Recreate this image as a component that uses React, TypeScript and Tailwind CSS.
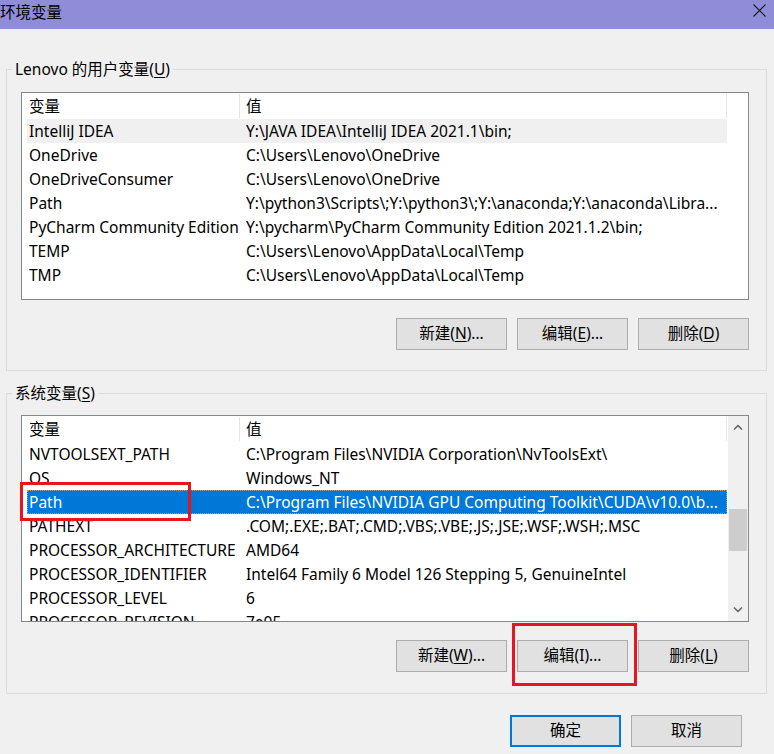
import React from 'react'

type Row = { name: string; value: string }

const userVars: Row[] = [
  { name: 'IntelliJ IDEA', value: 'Y:\\JAVA IDEA\\IntelliJ IDEA 2021.1\\bin;' },
  { name: 'OneDrive', value: 'C:\\Users\\Lenovo\\OneDrive' },
  { name: 'OneDriveConsumer', value: 'C:\\Users\\Lenovo\\OneDrive' },
  { name: 'Path', value: 'Y:\\python3\\Scripts\\;Y:\\python3\\;Y:\\anaconda;Y:\\anaconda\\Libra...' },
  { name: 'PyCharm Community Edition', value: 'Y:\\pycharm\\PyCharm Community Edition 2021.1.2\\bin;' },
  { name: 'TEMP', value: 'C:\\Users\\Lenovo\\AppData\\Local\\Temp' },
  { name: 'TMP', value: 'C:\\Users\\Lenovo\\AppData\\Local\\Temp' },
]

const sysVars: Row[] = [
  { name: 'NVTOOLSEXT_PATH', value: 'C:\\Program Files\\NVIDIA Corporation\\NvToolsExt\\' },
  { name: 'OS', value: 'Windows_NT' },
  { name: 'Path', value: 'C:\\Program Files\\NVIDIA GPU Computing Toolkit\\CUDA\\v10.0\\b...' },
  { name: 'PATHEXT', value: '.COM;.EXE;.BAT;.CMD;.VBS;.VBE;.JS;.JSE;.WSF;.WSH;.MSC' },
  { name: 'PROCESSOR_ARCHITECTURE', value: 'AMD64' },
  { name: 'PROCESSOR_IDENTIFIER', value: 'Intel64 Family 6 Model 126 Stepping 5, GenuineIntel' },
  { name: 'PROCESSOR_LEVEL', value: '6' },
  { name: 'PROCESSOR_REVISION', value: '7e05' },
]

function Button({ label, acc, after = '', primary = false }: { label: string; acc?: string; after?: string; primary?: boolean }) {
  return (
    <button
      className={`w-[111px] h-[32px] bg-[#e1e1e1] text-black flex items-center justify-center ${
        primary ? 'border-2 border-[#0078d7]' : 'border border-[#adadad]'
      }`}
    >
      {label}
      {acc !== undefined && (
        <>
          (<span className={acc === 'I' ? '' : 'underline underline-offset-2'}>{acc}</span>)
        </>
      )}
      {after}
    </button>
  )
}

function Header() {
  return (
    <div className="flex h-[26px] w-[705px] shrink-0">
      <div className="w-[218px] pl-[7px] border-r border-[#e5e5e5] my-[1px] leading-[24px]">变量</div>
      <div className="flex-1 pl-[6px] border-r border-[#e5e5e5] my-[1px] leading-[24px]">值</div>
    </div>
  )
}

function ListRow({ row, state }: { row: Row; state?: 'gray' | 'blue' }) {
  const bg =
    state === 'gray'
      ? 'bg-[#f0f0f0] border border-transparent'
      : state === 'blue'
      ? 'bg-[#0078d7] text-white border border-dotted border-[#ff8728]'
      : 'border border-transparent'
  return (
    <div className={`ml-[5px] w-[700px] h-[24px] flex shrink-0 whitespace-nowrap leading-[22px] ${bg}`}>
      <div className="w-[213px] pl-[1px] overflow-hidden">{row.name}</div>
      <div className="flex-1 pl-[5px] overflow-hidden">{row.value}</div>
    </div>
  )
}

function Chevron({ up }: { up?: boolean }) {
  return (
    <svg width="10" height="6" viewBox="0 0 10 6" className="block">
      <path
        d={up ? 'M1 5.5 L5 1.5 L9 5.5' : 'M1 0.5 L5 4.5 L9 0.5'}
        fill="none"
        stroke="#606060"
        strokeWidth="1.5"
      />
    </svg>
  )
}

export default function App() {
  return (
    <div
      className="relative w-[774px] h-[754px] bg-[#f0f0f0] overflow-hidden text-[15.5px] text-black"
      style={{ fontFamily: '"Noto Sans", "Noto Sans CJK SC", sans-serif' }}
    >
      {/* title bar */}
      <div className="h-[29px] bg-[#8f8cd8] flex items-center justify-between">
        <span className="leading-[20px] -mt-[6px]">环境变量</span>
        <svg width="13" height="13" viewBox="0 0 13 13" className="mr-[8px] -mt-[8px]">
          <path d="M0.5 0.5 L12.5 12.5 M12.5 0.5 L0.5 12.5" stroke="#1a1a1a" strokeWidth="1.1" />
        </svg>
      </div>

      {/* user variables */}
      <fieldset className="mt-[30px] ml-[6px] mr-[7px] border border-[#dcdcdc]">
        <legend className="ml-[5px] px-[3px] leading-[20px]">
          Lenovo 的用户变量(<span className="underline underline-offset-2">U</span>)
        </legend>
        <div className="pt-[13px] pl-[14px] pr-[17px] pb-[20px]">
          <div className="h-[208px] border border-[#828790] bg-white flex flex-col overflow-hidden">
            <Header />
            {userVars.map((r, i) => (
              <ListRow key={r.name} row={r} state={i === 0 ? 'gray' : undefined} />
            ))}
          </div>
          <div className="mt-[18px] flex justify-end gap-[10px]">
            <Button label="新建" acc="N" after="..." />
            <Button label="编辑" acc="E" after="..." />
            <Button label="删除" acc="D" />
          </div>
        </div>
      </fieldset>

      {/* system variables */}
      <fieldset className="mt-[12px] ml-[6px] mr-[7px] border border-[#dcdcdc]">
        <legend className="ml-[5px] px-[3px] leading-[20px]">
          系统变量(<span className="underline underline-offset-2">S</span>)
        </legend>
        <div className="pt-[12px] pl-[14px] pr-[17px] pb-[21px]">
          <div className="h-[207px] border border-[#828790] bg-white flex overflow-hidden">
            <div className="flex-1 flex flex-col overflow-hidden">
              <Header />
              {sysVars.map((r) => (
                <ListRow key={r.name} row={r} state={r.name === 'Path' ? 'blue' : undefined} />
              ))}
            </div>
            <div className="w-[20px] bg-[#f0f0f0] flex flex-col items-center">
              <div className="h-[22px] flex items-center justify-center">
                <Chevron up />
              </div>
              <div className="mt-[71px] w-[18px] h-[42px] bg-[#cdcdcd]" />
              <div className="flex-1" />
              <div className="h-[22px] flex items-center justify-center">
                <Chevron />
              </div>
            </div>
          </div>
          <div className="mt-[18px] flex justify-end gap-[10px]">
            <Button label="新建" acc="W" after="..." />
            <Button label="编辑" acc="I" after="..." />
            <Button label="删除" acc="L" />
          </div>
        </div>
      </fieldset>

      <div className="mt-[21px] flex justify-end gap-[10px] pr-[32px]">
        <Button label="确定" primary />
        <Button label="取消" />
      </div>

      {/* red annotation boxes */}
      <div className="absolute left-[20px] top-[482px] w-[171px] h-[39px] border-[3px] border-[#e8141e]" />
      <div className="absolute left-[512px] top-[623px] w-[125px] h-[63px] border-[3px] border-[#e8141e]" />
    </div>
  )
}
